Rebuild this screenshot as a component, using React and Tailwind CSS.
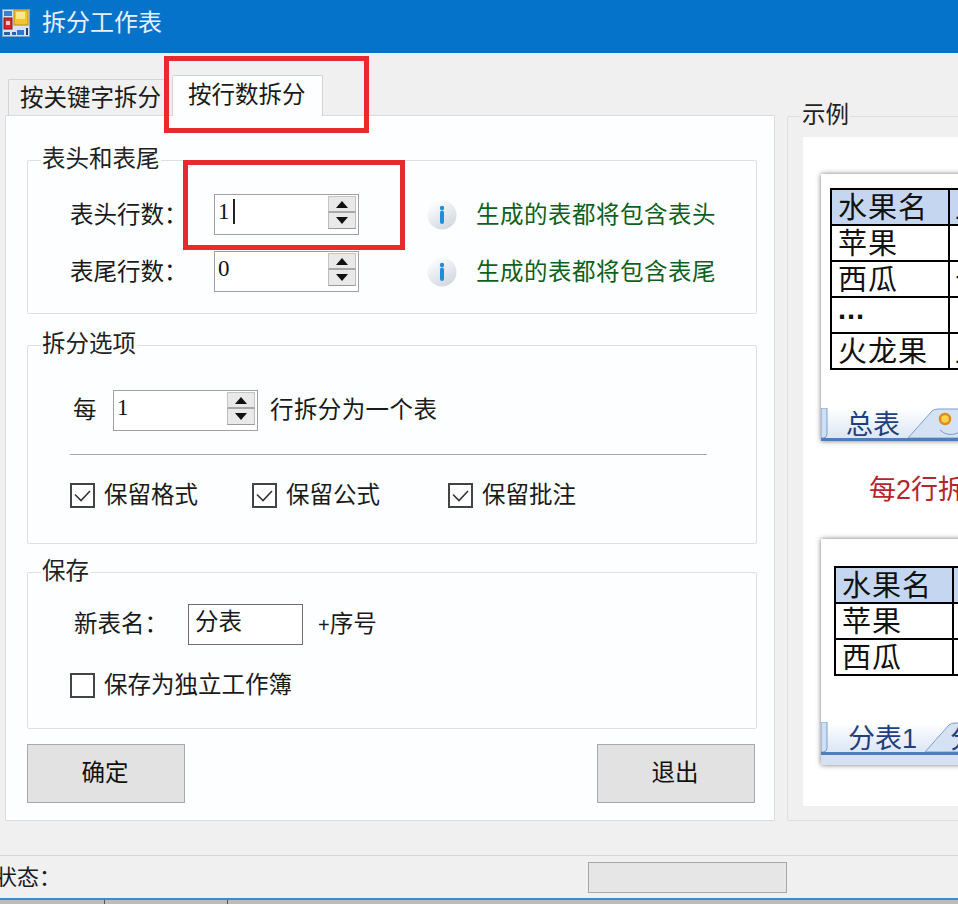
const FONT = "font-['Liberation_Sans','Noto_Sans_CJK_SC',sans-serif]";

const AppIcon = () => (
  <svg width="28" height="28" viewBox="0 0 28 28" className="shrink-0">
    <rect x="0.5" y="0.5" width="27" height="27" fill="#d5e3f2" stroke="#7fa3c8" />
    <rect x="2" y="2" width="8" height="5" fill="#3f7fd0" />
    <rect x="12" y="1" width="14" height="15" fill="#f4c430" stroke="#b98a12" />
    <rect x="14" y="3" width="9" height="7" fill="#fbe88a" />
    <rect x="2" y="9" width="8" height="11" fill="#d8262c" stroke="#8f1418" />
    <rect x="4" y="12" width="4" height="4" fill="#f7c5c5" />
    <rect x="2" y="23" width="6" height="3" fill="#2b5fa8" />
    <rect x="10" y="23" width="4" height="3" fill="#2b5fa8" />
    <rect x="15" y="21" width="7" height="5" fill="#2f78d0" />
    <rect x="24" y="19" width="2" height="7" fill="#1d3f73" />
  </svg>
);

const InfoIcon = () => (
  <svg width="30" height="30" viewBox="0 0 30 30" className="shrink-0">
    <defs>
      <linearGradient id="infoBg" x1="0.2" y1="0" x2="0.8" y2="1">
        <stop offset="0" stopColor="#ffffff" />
        <stop offset="1" stopColor="#cfd6dc" />
      </linearGradient>
    </defs>
    <circle cx="15" cy="15" r="14.5" fill="url(#infoBg)" />
    <circle cx="15" cy="8" r="2.2" fill="#1c8fdc" />
    <path d="M15 12.5V22" stroke="#1c8fdc" strokeWidth="4" strokeLinecap="round" />
  </svg>
);

const SpinBox = ({ value, caret = false }) => (
  <div className="flex h-[41px] w-[145px] shrink-0 justify-between border border-[#a0a0a0] bg-white pl-[3px] pr-[2px] pt-[1px]">
    <div className="flex h-[30px] items-center font-['Liberation_Serif','Noto_Sans_CJK_SC',serif] text-[23px] leading-none text-[#111]">
      {value}
      {caret && <span className="ml-[3px] h-[25px] w-[2px] bg-[#222]" />}
    </div>
    <div className="flex h-[33px] w-[28px] flex-col">
      <div className="flex h-[17px] items-center justify-center border border-b-2 border-[#c4c4c4] border-b-[#a8a8a8] bg-[#e9e9e9]">
        <svg width="12" height="7" viewBox="0 0 12 7"><path d="M6 0L12 7H0Z" fill="#111" /></svg>
      </div>
      <div className="flex h-[16px] items-center justify-center border border-t-0 border-[#bcbcbc] border-b-[#999] bg-[#e9e9e9]">
        <svg width="12" height="7" viewBox="0 0 12 7"><path d="M0 0H12L6 7Z" fill="#111" /></svg>
      </div>
    </div>
  </div>
);

const CheckBox = ({ checked = false }) => (
  <span className="flex h-[25px] w-[25px] shrink-0 items-center justify-center border-2 border-[#444] bg-white">
    {checked && (
      <svg width="19" height="15" viewBox="0 0 19 15">
        <path d="M2 6.5L8 12.5L17 3" fill="none" stroke="#333" strokeWidth="1.6" />
      </svg>
    )}
  </span>
);

const CheckLabel = ({ label, checked, className = "" }) => (
  <label className={`flex items-center gap-[9px] ${className}`}>
    <CheckBox checked={checked} />
    <span>{label}</span>
  </label>
);

const GroupBox = ({ title, className = "", titleBg = "bg-[#fdfeff]", children }) => (
  <div className={`relative rounded-[2px] border border-[#dcdfe3] ${className}`}>
    <span className={`absolute left-[13px] top-[-17px] px-px leading-[30px] text-[#222] ${titleBg}`}>{title}</span>
    {children}
  </div>
);

const InfoRow = ({ label, value, caret, hint, className = "" }) => (
  <div className={`flex h-[41px] items-center ${className}`}>
    <span className="w-[186px] shrink-0 whitespace-nowrap pl-[42px] pt-[2px]">{label}</span>
    <SpinBox value={value} caret={caret} />
    <span className="ml-[68px]"><InfoIcon /></span>
    <span className="ml-[19px] whitespace-nowrap pt-[2px] tracking-[0.5px] text-[#0f5f1c]">{hint}</span>
  </div>
);

const GrayButton = ({ label }) => (
  <button className="flex h-[59px] w-[158px] items-center justify-center border border-[#a8a8a8] bg-[#e2e2e3] pr-[2px] text-[#111]">
    {label}
  </button>
);

const SheetTable = ({ rows }) => (
  <div className="w-[200px] border-l-2 border-t-2 border-black text-[29px] leading-none text-[#111]">
    {rows.map((row, i) => (
      <div key={i} className="flex h-[36px] border-b-2 border-black">
        <div className={`flex w-[118px] shrink-0 items-center border-r-2 border-black pl-[6px] pt-[3px] tracking-[1px] ${row[0] === "..." ? "pb-[14px] font-bold" : ""} ${i === 0 ? "bg-[#c5d7f0]" : ""}`}>
          {row[0]}
        </div>
        <div className={`flex flex-1 items-center pl-[5px] pt-[3px] ${i === 0 ? "bg-[#c5d7f0]" : ""}`}>{row[1]}</div>
      </div>
    ))}
  </div>
);

const SheetTabs = ({ label, second, flower, labelClass = "" }) => (
  <div className="mt-auto flex h-[33px] shrink-0 items-start overflow-hidden border-b-[3px] border-[#4f7dbb] bg-gradient-to-b from-white to-[#dbe6f5]">
    <svg width="7" height="30" viewBox="0 0 7 30" className="shrink-0">
      <path d="M0 0H6V26Q6 30 2 30H0Z" fill="#cfe0f5" stroke="#7d9fcb" />
    </svg>
    <span className={`ml-[20px] shrink-0 whitespace-nowrap text-[27px] leading-[34px] text-[#1f3f7f] ${labelClass}`}>{label}</span>
    <div className="relative h-[30px] w-[60px] shrink-0">
      <svg width="60" height="30" viewBox="0 0 60 30" className="absolute inset-0">
        <path d="M0 30L24 3Q26 1 30 1H60V30Z" fill="#d4e2f4" stroke="#7d9fcb" />
        {flower && <circle cx="37" cy="11" r="5" fill="#fcd34d" stroke="#e08a1e" strokeWidth="2.5" />}
        {flower && <path d="M32 22Q40 30 52 24" fill="none" stroke="#7d9fcb" />}
      </svg>
      {second && <span className="absolute left-[25px] top-0 whitespace-nowrap text-[27px] leading-[34px] text-[#1f3f7f]">{second}</span>}
    </div>
  </div>
);

const App = () => (
  <div className={`relative flex h-[904px] w-[958px] flex-col overflow-hidden bg-[#f0f0f0] text-[23.5px] text-[#1a1a1a] ${FONT}`}>
    {/* title bar */}
    <div className="flex h-[53px] shrink-0 items-center gap-[12px] bg-[#0673cb] pb-[7px] pl-[2px]">
      <AppIcon />
      <span className="text-[24px] leading-none text-[#e6f1fb]">拆分工作表</span>
    </div>

    <div className="flex h-[802px] shrink-0 pl-[5px] pt-[22px]">
      {/* left tab control */}
      <div className="flex w-[770px] shrink-0 flex-col">
        <div className="relative z-10 -mb-px flex h-[41px] shrink-0 items-end pl-[3px]">
          <div className="flex h-[37px] w-[157px] items-center whitespace-nowrap rounded-t-[2px] border-l border-t border-[#d4d4d4] pl-[11px] pt-[2px]">按关键字拆分</div>
          <div className="ml-[7px] flex h-[41px] w-[151px] items-start rounded-t-[2px] border-l border-r border-t border-[#d4d4d4] bg-[#fdfeff] pl-[15px] pt-[2px] leading-[34px]">按行数拆分</div>
        </div>
        <div className="flex h-[706px] flex-col rounded-[2px] border border-[#dcdcdc] bg-[#fdfeff] pl-[21px] pt-[44px]">
          <GroupBox title="表头和表尾" className="h-[154px] w-[730px] pt-[33px]">
            <InfoRow label="表头行数：" value="1" caret hint="生成的表都将包含表头" />
            <InfoRow label="表尾行数：" value="0" className="mt-[16px]" hint="生成的表都将包含表尾" />
          </GroupBox>

          <GroupBox title="拆分选项" className="mt-[31px] h-[199px] w-[730px] pl-[42px] pt-[44px]">
            <div className="flex h-[41px] items-center">
              <span className="w-[43px] pl-[3px]">每</span>
              <SpinBox value="1" />
              <span className="ml-[12px] whitespace-nowrap tracking-[0.4px]">行拆分为一个表</span>
            </div>
            <div className="mt-[23px] h-px w-[637px] bg-[#a4a8ac]" />
            <div className="mt-[28px] flex h-[25px] items-center whitespace-nowrap">
              <CheckLabel label="保留格式" checked className="w-[182px]" />
              <CheckLabel label="保留公式" checked className="w-[196px]" />
              <CheckLabel label="保留批注" checked />
            </div>
          </GroupBox>

          <GroupBox title="保存" className="mt-[28px] h-[157px] w-[730px] pl-[42px] pt-[31px]">
            <div className="flex h-[41px] items-center whitespace-nowrap">
              <span className="w-[118px] pl-[4px]">新表名：</span>
              <div className="flex h-[41px] w-[115px] items-center border border-[#6f6a75] bg-white pb-[4px] pl-[6px]">分表</div>
              <span className="ml-[15px]"><span className="text-[20px]">+</span>序号</span>
            </div>
            <CheckLabel label="保存为独立工作簿" className="mt-[23px] whitespace-nowrap" />
          </GroupBox>

          <div className="mt-[15px] flex w-[728px] justify-between">
            <GrayButton label="确定" />
            <GrayButton label="退出" />
          </div>
        </div>
      </div>

      {/* sample group */}
      <div className="ml-[12px] mt-[41px] h-[705px] w-[260px] shrink-0">
        <GroupBox title="示例" titleBg="bg-[#f0f0f0]" className="h-[705px] pl-[15px] pt-[20px]">
          <div className="flex h-[669px] flex-col bg-white pl-[18px] pt-[37px]">
            <div className="flex h-[267px] w-[240px] shrink-0 flex-col bg-white shadow-[0_0_5px_rgba(0,0,0,0.55)]">
              <div className="pl-[9px] pt-[14px]">
                <SheetTable rows={[["水果名", "上"], ["苹果", ""], ["西瓜", "十"], ["...", ""], ["火龙果", "上"]]} />
              </div>
              <SheetTabs label="总表" flower labelClass="w-[60px] -translate-x-[2px]" />
            </div>
            <div className="flex h-[98px] shrink-0 items-center whitespace-nowrap pl-[48px] text-[27px] text-[#b3262e]">每2行拆分为一个表</div>
            <div className="flex h-[226px] w-[240px] shrink-0 flex-col bg-white shadow-[0_0_5px_rgba(0,0,0,0.55)]">
              <div className="pl-[13px] pt-[27px]">
                <SheetTable rows={[["水果名", ""], ["苹果", ""], ["西瓜", ""]]} />
              </div>
              <div className="mt-auto bg-[#d5e1f2] pb-[10px]">
                <SheetTabs label="分表1" second="分" labelClass="w-[77px]" />
              </div>
            </div>
          </div>
        </GroupBox>
      </div>
    </div>

    {/* status bar */}
    <div className="flex h-[43px] shrink-0 items-center border-t border-[#d6d6d6]">
      <div className="-ml-[5px] w-[593px] shrink-0 whitespace-nowrap text-[22px]">状态：</div>
      <div className="h-[31px] w-[199px] border border-[#a8a8a8] bg-[#e6e6e6]" />
    </div>
    <div className="h-[2px] shrink-0 bg-[#3d8cc8]" />
    <div className="flex h-[4px] shrink-0 bg-[#bcbcbc]">
      <div className="w-[105px] border-r border-[#555]" />
      <div className="w-[123px] border-r border-[#555]" />
    </div>

    {/* red highlight boxes drawn over the dialog */}
    <div className="pointer-events-none absolute left-[164px] top-[56px] z-20 h-[77px] w-[205px] border-[5px] border-[#e8292d]" />
    <div className="pointer-events-none absolute left-[183px] top-[160px] z-20 h-[90px] w-[222px] border-[5px] border-[#e8292d]" />
  </div>
);

export default App;
